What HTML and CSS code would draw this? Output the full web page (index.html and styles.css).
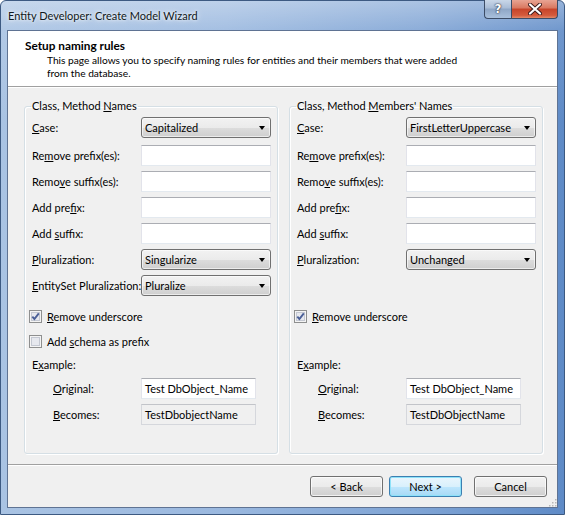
FILE: index.html
```html
<!DOCTYPE html>
<html>
<head>
<meta charset="utf-8">
<title>Entity Developer: Create Model Wizard</title>
<link rel="stylesheet" href="styles.css">
</head>
<body>
<div class="window">
  <div class="titlebar">
    <span class="title">Entity Developer: Create Model Wizard</span>
    <div class="caption-buttons">
      <div class="cap help">?</div>
      <div class="cap close">
        <svg width="14" height="12" viewBox="0 0 14 12"><path d="M2 1.5 L12 10.5 M12 1.5 L2 10.5" stroke="#3b1a1a" stroke-width="4" stroke-linecap="round"/><path d="M2 1.5 L12 10.5 M12 1.5 L2 10.5" stroke="#fff" stroke-width="2.2" stroke-linecap="round"/></svg>
      </div>
    </div>
  </div>
  <div class="client">
    <div class="header">
      <div class="h-title">Setup naming rules</div>
      <div class="h-desc">This page allows you to specify naming rules for entities and their members that were added<br>from the database.</div>
    </div>
    <div class="groups">
      <fieldset class="group">
        <legend>Class, Method <u>N</u>ames</legend>
        <div class="rows">
          <div class="row first"><span class="lbl"><u>C</u>ase:</span><div class="combo">Capitalized<span class="arrow"></span></div></div>
          <div class="row"><span class="lbl">Re<u>m</u>ove prefix(es):</span><div class="input"></div></div>
          <div class="row"><span class="lbl">Remo<u>v</u>e suffix(es):</span><div class="input"></div></div>
          <div class="row"><span class="lbl">Add pre<u>f</u>ix:</span><div class="input"></div></div>
          <div class="row"><span class="lbl">Add <u>s</u>uffix:</span><div class="input"></div></div>
          <div class="row"><span class="lbl"><u>P</u>luralization:</span><div class="combo">Singularize<span class="arrow"></span></div></div>
          <div class="row"><span class="lbl"><u>E</u>ntitySet Pluralization:</span><div class="combo">Pluralize<span class="arrow"></span></div></div>
          <div class="check first-check"><span class="box"><svg width="13" height="13" viewBox="0 0 13 13"><rect x="0.5" y="0.5" width="12" height="12" fill="#f4f4f4" stroke="#8e8f8f"/><rect x="2.5" y="2.5" width="8" height="8" fill="#e6e8ee" stroke="#c4c8d2"/><path d="M3.3 6.6 L5.4 9 L9.8 3.4" fill="none" stroke="#4a5f97" stroke-width="1.9"/></svg></span><span><u>R</u>emove underscore</span></div>
          <div class="check"><span class="box"><svg width="13" height="13" viewBox="0 0 13 13"><rect x="0.5" y="0.5" width="12" height="12" fill="#f4f4f4" stroke="#8e8f8f"/><rect x="2.5" y="2.5" width="8" height="8" fill="#e6e8ee" stroke="#c4c8d2"/></svg></span><span>Add <u>s</u>chema as prefix</span></div>
          <div class="example">E<u>x</u>ample:</div>
          <div class="row"><span class="lbl sub"><u>O</u>riginal:</span><div class="input short">Test DbObject_Name</div></div>
          <div class="row"><span class="lbl sub"><u>B</u>ecomes:</span><div class="input short ro">TestDbobjectName</div></div>
        </div>
      </fieldset>
      <fieldset class="group">
        <legend>Class, Method <u>M</u>embers' Names</legend>
        <div class="rows">
          <div class="row first"><span class="lbl"><u>C</u>ase:</span><div class="combo">FirstLetterUppercase<span class="arrow"></span></div></div>
          <div class="row"><span class="lbl">Re<u>m</u>ove prefix(es):</span><div class="input"></div></div>
          <div class="row"><span class="lbl">Remo<u>v</u>e suffix(es):</span><div class="input"></div></div>
          <div class="row"><span class="lbl">Add pre<u>f</u>ix:</span><div class="input"></div></div>
          <div class="row"><span class="lbl">Add <u>s</u>uffix:</span><div class="input"></div></div>
          <div class="row"><span class="lbl"><u>P</u>luralization:</span><div class="combo">Unchanged<span class="arrow"></span></div></div>
          <div class="row empty"></div>
          <div class="check first-check"><span class="box"><svg width="13" height="13" viewBox="0 0 13 13"><rect x="0.5" y="0.5" width="12" height="12" fill="#f4f4f4" stroke="#8e8f8f"/><rect x="2.5" y="2.5" width="8" height="8" fill="#e6e8ee" stroke="#c4c8d2"/><path d="M3.3 6.6 L5.4 9 L9.8 3.4" fill="none" stroke="#4a5f97" stroke-width="1.9"/></svg></span><span><u>R</u>emove underscore</span></div>
          <div class="check empty"></div>
          <div class="example">E<u>x</u>ample:</div>
          <div class="row"><span class="lbl sub"><u>O</u>riginal:</span><div class="input short">Test DbObject_Name</div></div>
          <div class="row"><span class="lbl sub"><u>B</u>ecomes:</span><div class="input short ro">TestDbObjectName</div></div>
        </div>
      </fieldset>
    </div>
    <div class="footer">
      <div class="btn back">&lt; Back</div>
      <div class="btn next">Next &gt;</div>
      <div class="btn cancel">Cancel</div>
      <svg class="grip" width="10" height="10" viewBox="0 0 10 10" fill="#b8b8b8"><rect x="8" y="2" width="1.5" height="1.5"/><rect x="5" y="5" width="1.5" height="1.5"/><rect x="8" y="5" width="1.5" height="1.5"/><rect x="2" y="8" width="1.5" height="1.5"/><rect x="5" y="8" width="1.5" height="1.5"/><rect x="8" y="8" width="1.5" height="1.5"/></svg>
    </div>
  </div>
</div>
</body>
</html>
```
FILE: styles.css
```css
html, body {
  margin: 0;
  padding: 0;
}
body {
  width: 565px;
  height: 515px;
  overflow: hidden;
  font-family: "Lato", "Open Sans", sans-serif;
  font-size: 11px;
  color: #000;
}
u {
  text-decoration: underline;
  text-underline-offset: 1px;
}
.window {
  width: 565px;
  height: 515px;
  box-sizing: border-box;
  display: flex;
  flex-direction: column;
  border: 1px solid #3d5a82;
  border-radius: 6px 6px 0 0;
  background:
    linear-gradient(to bottom, rgba(255,255,255,0.35) 0px, rgba(255,255,255,0.1) 30px, rgba(255,255,255,0) 120px),
    linear-gradient(to right, #a9c3e3 0%, #9ab8df 40%, #7ea3d4 75%, #5f8bc7 100%);
}
.titlebar {
  height: 29px;
  display: flex;
  align-items: flex-start;
}
.title {
  padding: 7px 0 0 7px;
  line-height: 15px;
  font-size: 11px;
  color: #101820;
  text-shadow: 0 0 6px rgba(255,255,255,0.9), 0 0 3px rgba(255,255,255,0.9);
}
.caption-buttons {
  margin-left: auto;
  margin-right: 6px;
  margin-top: -1px;
  display: flex;
}
.cap {
  height: 19px;
  box-sizing: border-box;
  display: flex;
  align-items: center;
  justify-content: center;
  border: 1px solid #3c4c66;
  border-top: none;
}
.help {
  width: 27px;
  border-radius: 0 0 0 4px;
  border-right: none;
  background: linear-gradient(to bottom, #c9d7e8 0%, #a9bcd6 45%, #8ea6c6 50%, #a9c0dc 100%);
  color: #fff;
  font-family: "DejaVu Sans", sans-serif;
  font-weight: bold;
  font-size: 12px;
  text-shadow: 0 0 2px #223, 0 0 1px #223;
}
.close {
  width: 47px;
  border-radius: 0 0 4px 0;
  background: linear-gradient(to bottom, #e8a493 0%, #d9785f 45%, #c7442a 50%, #d45a3c 85%, #e38a6a 100%);
}
.client {
  flex: 1;
  margin: 0 6px 6px 6px;
  border: 1px solid #5f7393;
  background: #f0f0f0;
  display: flex;
  flex-direction: column;
}
.header {
  height: 56px;
  box-sizing: border-box;
  background: #fff;
  border-bottom: 1px solid #a0a0a0;
  padding: 7px 0 0 17px;
  box-shadow: 0 1px 0 #fff;
}
.h-title {
  font-weight: bold;
  font-size: 11.8px;
  line-height: 15px;
}
.h-desc {
  margin-top: 1px;
  padding-left: 22px;
  font-size: 10.2px;
  line-height: 13px;
}
.groups {
  display: flex;
  gap: 11px;
  padding: 11px 14px 0 16px;
}
.group {
  flex: 1;
  min-width: 0;
  margin: 0;
  padding: 3px 6px 28px 7px;
  border: 1px solid #d5dfe5;
  border-radius: 3px;
  box-shadow: inset 1px 1px 0 #fff, 1px 1px 0 #fff;
}
.group legend {
  padding: 0 1px;
  margin-left: -1px;
  line-height: 16px;
}
.rows {
  display: flex;
  flex-direction: column;
  gap: 5px;
}
.row {
  display: grid;
  grid-template-columns: 109px 1fr;
  align-items: center;
  height: 21px;
}
.row.first {
  margin-bottom: 2px;
}
.lbl {
  white-space: nowrap;
}
.lbl.sub {
  padding-left: 21px;
}
.combo {
  position: relative;
  height: 21px;
  box-sizing: border-box;
  border: 1px solid #707070;
  border-radius: 3px;
  background: linear-gradient(to bottom, #f2f2f2 0%, #ebebeb 50%, #dddddd 51%, #cfcfcf 100%);
  padding-left: 3px;
  line-height: 19px;
  box-shadow: inset 0 0 0 1px rgba(255,255,255,0.6);
}
.arrow {
  position: absolute;
  right: 5px;
  top: 8px;
  width: 0;
  height: 0;
  border-left: 3.5px solid transparent;
  border-right: 3.5px solid transparent;
  border-top: 4px solid #000;
}
.input {
  height: 21px;
  box-sizing: border-box;
  background: #fff;
  border: 1px solid #e2e3ea;
  border-top-color: #abadb3;
  border-bottom-color: #e3e9ef;
  padding-left: 3px;
  line-height: 19px;
}
.input.short {
  width: 115px;
}
.input.ro {
  background: #f0f0f0;
  border-color: #d5d7dc;
  border-top-color: #c2c4c9;
}
.check {
  display: flex;
  align-items: center;
  gap: 5px;
  height: 16px;
  margin-left: -3px;
  margin-top: 4px;
}
.check.first-check {
  margin-top: 7px;
}
.box {
  display: flex;
}
.example {
  height: 16px;
  line-height: 16px;
  margin-top: 3px;
}
.footer {
  flex: 1;
  position: relative;
  margin-top: 10px;
  border-top: 1px solid #a0a0a0;
  box-shadow: inset 0 1px 0 #fff;
  display: flex;
  justify-content: flex-end;
  align-items: flex-start;
  padding: 11px 10px 0 0;
  gap: 6px;
}
.btn {
  width: 73px;
  height: 21px;
  box-sizing: border-box;
  border: 1px solid #707070;
  border-radius: 3px;
  background: linear-gradient(to bottom, #f2f2f2 0%, #ebebeb 50%, #dddddd 51%, #cfcfcf 100%);
  box-shadow: inset 0 0 0 1px rgba(255,255,255,0.7);
  text-align: center;
  line-height: 19px;
}
.btn.next {
  border-color: #3c7fb1;
  background: linear-gradient(to bottom, #eaf6fd 0%, #d9f0fc 50%, #bee6fd 51%, #a7d9f5 100%);
  box-shadow: inset 0 0 0 1px #8ee2f9;
}
.btn.cancel {
  margin-left: 6px;
}
.grip {
  position: absolute;
  right: 0;
  bottom: 0;
}
```
